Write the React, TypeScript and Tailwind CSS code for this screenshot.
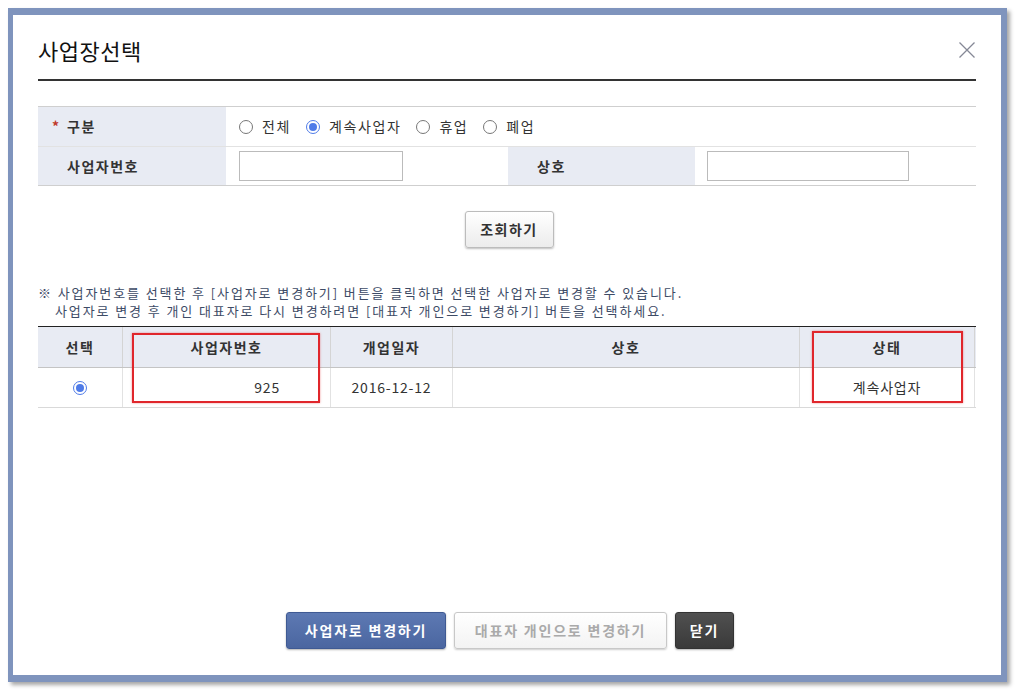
const font = { fontFamily: '"Noto Sans CJK KR", "Noto Sans", sans-serif' };

function Radio({ checked }: { checked?: boolean }) {
  return (
    <span
      className={
        "inline-flex h-[14px] w-[14px] shrink-0 items-center justify-center rounded-full border bg-white " +
        (checked ? "border-[#4f7be8]" : "border-[#777]")
      }
    >
      {checked && <span className="h-[8px] w-[8px] rounded-full bg-[#4f7be8]" />}
    </span>
  );
}

function Option({ label, checked }: { label: string; checked?: boolean }) {
  return (
    <label className="flex items-center gap-[9px]">
      <Radio checked={checked} />
      <span>{label}</span>
    </label>
  );
}

export default function App() {
  return (
    <div className="min-h-[692px] bg-white pl-[8px] pt-[8px] text-[#333]" style={font}>
      <div className="flex h-[674px] w-[999px] flex-col border-b-[7px] border-l-[5px] border-r-[6px] border-t-[7px] border-[#7f94bd] bg-white px-[25px] shadow-[3px_3px_4px_rgba(0,0,0,0.35)]">
        {/* Title */}
        <div className="flex h-[66px] items-center justify-between border-b-2 border-[#333] pt-[6px]">
          <h1 className="text-[22px] leading-[30px] font-normal tracking-[0.5px] text-[#111]">사업장선택</h1>
          <svg width="16" height="16" viewBox="0 0 16 16" className="mr-[1px]">
            <path d="M0.5 0.5 L15.5 15.5 M15.5 0.5 L0.5 15.5" stroke="#858896" strokeWidth="1.3" fill="none" />
          </svg>
        </div>

        {/* Search form */}
        <div className="mt-[25px] border-t border-[#cfcfcf] text-[14px]">
          <div className="flex h-[40px] border-b border-[#e2e2e2]">
            <div className="flex w-[188px] items-center bg-[#e8ebf3] pl-[14px] font-bold tracking-[1.5px] text-[#333]">
              <span className="mr-[7px] w-[8px] text-[#c0392b]">*</span>
              구분
            </div>
            <div className="flex items-center gap-[15px] pl-[13px] tracking-[1.6px]">
              <Option label="전체" />
              <Option label="계속사업자" checked />
              <Option label="휴업" />
              <Option label="폐업" />
            </div>
          </div>
          <div className="flex h-[39px] border-b border-[#cfcfcf]">
            <div className="flex w-[188px] items-center bg-[#e8ebf3] pl-[29px] font-bold tracking-[1.5px]">
              사업자번호
            </div>
            <div className="flex w-[282px] items-center pl-[13px]">
              <input className="h-[30px] w-[164px] border border-[#bbb] bg-white outline-none" />
            </div>
            <div className="flex w-[187px] items-center bg-[#e8ebf3] pl-[29px] font-bold tracking-[1.5px]">
              상호
            </div>
            <div className="flex flex-1 items-center pl-[12px]">
              <input className="h-[30px] w-[202px] border border-[#bbb] bg-white outline-none" />
            </div>
          </div>
        </div>

        <div className="mt-[25px] flex justify-center pl-[4px]">
          <button className="h-[37px] w-[89px] rounded-[3px] border border-[#bcbcbc] bg-gradient-to-b from-white to-[#ececec] text-[14px] font-bold tracking-[1.5px] text-[#333] shadow-[0_1px_2px_rgba(0,0,0,0.25)]">
            조회하기
          </button>
        </div>

        {/* Notice */}
        <div className="mt-[36px] text-[13px] leading-[18px] tracking-[1.9px] text-[#3d4b66]">
          <p>※ 사업자번호를 선택한 후 [사업자로 변경하기] 버튼을 클릭하면 선택한 사업자로 변경할 수 있습니다.</p>
          <p className="pl-[17px]">사업자로 변경 후 개인 대표자로 다시 변경하려면 [대표자 개인으로 변경하기] 버튼을 선택하세요.</p>
        </div>

        {/* Result table */}
        <div className="relative mt-[6px] border-t border-[#222] text-[14px]">
          <div className="flex h-[41px] border-b border-[#c4c4c4] bg-[#e8ebf3] font-bold tracking-[1.5px]">
            <div className="flex w-[85px] items-center justify-center border-r border-[#d4d4d4]">선택</div>
            <div className="flex w-[208px] items-center justify-center border-r border-[#d4d4d4]">사업자번호</div>
            <div className="flex w-[122px] items-center justify-center border-r border-[#d4d4d4]">개업일자</div>
            <div className="flex w-[347px] items-center justify-center border-r border-[#d4d4d4]">상호</div>
            <div className="flex w-[175px] items-center justify-center border-r border-[#d4d4d4]">상태</div>
          </div>
          <div className="flex h-[40px] border-b border-[#d9d9d9] tracking-[0.8px]">
            <div className="flex w-[85px] items-center justify-center border-r border-[#e2e2e2]">
              <Radio checked />
            </div>
            <div className="flex w-[208px] items-center justify-end border-r border-[#e2e2e2] pr-[50px]">925</div>
            <div className="flex w-[122px] items-center justify-center border-r border-[#e2e2e2]">2016-12-12</div>
            <div className="w-[347px] border-r border-[#e2e2e2]" />
            <div className="flex w-[175px] items-center justify-center border-r border-[#e2e2e2]">계속사업자</div>
          </div>

          {/* highlight boxes */}
          <div className="absolute left-[94px] top-[6px] h-[70px] w-[188px] border-2 border-[#e0262b] shadow-[0_0_2px_rgba(224,38,43,0.5)]" />
          <div className="absolute left-[774px] top-[4px] h-[72px] w-[151px] border-2 border-[#e0262b] shadow-[0_0_2px_rgba(224,38,43,0.5)]" />
        </div>

        <div className="flex-1" />

        {/* Buttons */}
        <div className="flex justify-center gap-[8px] pb-[26px] pl-[6px] text-[14px] font-bold tracking-[1.8px]">
          <button className="h-[37px] w-[160px] rounded-[3px] border border-[#3f5a93] bg-gradient-to-b from-[#5d79b3] to-[#4b66a0] text-white shadow-[0_1px_2px_rgba(0,0,0,0.3)]">
            사업자로 변경하기
          </button>
          <button className="h-[37px] w-[213px] rounded-[3px] border border-[#c8c8c8] bg-gradient-to-b from-white to-[#f3f3f3] text-[#aaa] shadow-[0_1px_2px_rgba(0,0,0,0.2)]">
            대표자 개인으로 변경하기
          </button>
          <button className="h-[37px] w-[59px] rounded-[3px] border border-[#333] bg-gradient-to-b from-[#505050] to-[#3a3a3a] text-white shadow-[0_1px_2px_rgba(0,0,0,0.3)]">
            닫기
          </button>
        </div>
      </div>
    </div>
  );
}
